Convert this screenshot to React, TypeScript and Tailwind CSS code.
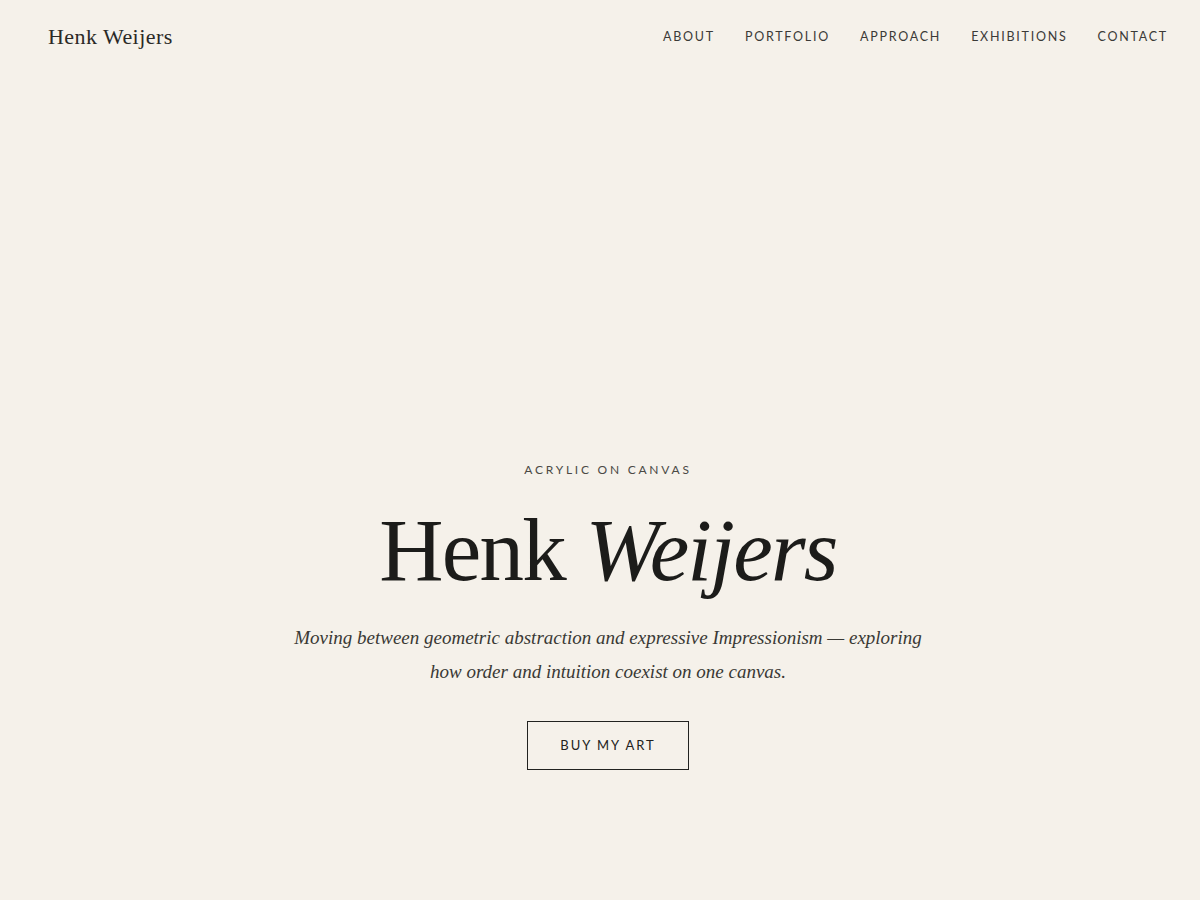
const navItems = ["About", "Portfolio", "Approach", "Exhibitions", "Contact"];

const serif = "font-['Liberation_Serif','DejaVu_Serif',serif]";
const sans = "font-['Lato','Noto_Sans',sans-serif]";

export default function App() {
  return (
    <div className="flex h-screen min-h-[900px] w-full flex-col bg-[#f5f1ea] text-[#1c1c1a]">
      <header className="flex h-[72px] items-center justify-between pl-12 pr-8">
        <a href="#" className={`${serif} text-[22px] tracking-[0.02em] text-[#2a2926]`}>
          Henk Weijers
        </a>
        <nav className={`${sans} flex items-center gap-[30px] pt-[2px] text-[12.5px] uppercase tracking-[0.14em] text-[#3b3a37]`}>
          {navItems.map((item) => (
            <a key={item} href="#">
              {item}
            </a>
          ))}
        </nav>
      </header>

      <main className="flex flex-1 flex-col items-center justify-end pb-[130px] pl-4 text-center">
        <div className={`${sans} text-[12px] uppercase tracking-[0.23em] text-[#4a4945]`}>
          Acrylic on Canvas
        </div>
        <h1 className={`${serif} mt-[27px] text-[89px] font-normal leading-none tracking-[-0.02em] text-[#1c1c1a]`}>
          Henk <em className="italic">Weijers</em>
        </h1>
        <p className={`${serif} mt-[26px] max-w-[660px] text-[19px] italic leading-[34px] text-[#3a3935]`}>
          Moving between geometric abstraction and expressive Impressionism — exploring how order and intuition coexist on one canvas.
        </p>
        <a
          href="#"
          className={`${sans} mt-[32px] flex h-[49px] w-[162px] items-center justify-center border border-[#222220] text-[13px] uppercase tracking-[0.15em] text-[#222220]`}
        >
          Buy my art
        </a>
      </main>
    </div>
  );
}
